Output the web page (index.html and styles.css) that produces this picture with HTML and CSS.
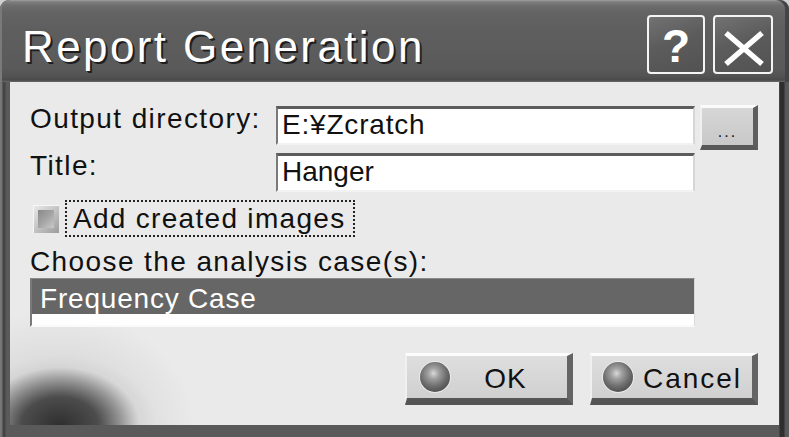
FILE: index.html
```html
<!DOCTYPE html>
<html lang="en">
<head>
<meta charset="utf-8">
<title>Report Generation</title>
<link rel="stylesheet" href="styles.css">
</head>
<body>
<div class="window">
  <div class="titlebar">
    <span class="title">Report Generation</span>
    <div class="caption-buttons">
      <div class="cap-btn help">?</div>
      <div class="cap-btn close">
        <svg width="56" height="55" viewBox="0 0 56 55"><path d="M11 16 L47 47 M47 16 L11 47" stroke="#fff" stroke-width="5.5" fill="none"/></svg>
      </div>
    </div>
  </div>
  <div class="content">
    <div class="form-grid">
      <div class="label">Output directory:</div>
      <div class="field">E:¥Zcratch</div>
      <div class="browse">...</div>
      <div class="label label-2">Title:</div>
      <div class="field field-2">Hanger</div>
    </div>
    <div class="check-row">
      <div class="checkbox"><div class="checkbox-inner"></div></div>
      <div class="focus">Add created images</div>
    </div>
    <div class="label choose">Choose the analysis case(s):</div>
    <div class="listbox">
      <div class="list-item selected">Frequency Case</div>
    </div>
    <div class="actions">
      <div class="btn"><span class="ball"></span><span class="btn-text ok">OK</span></div>
      <div class="btn btn-cancel"><span class="ball"></span><span class="btn-text cancel">Cancel</span></div>
    </div>
  </div>
</div>
</body>
</html>
```

FILE: styles.css
```css
html, body {
  margin: 0;
  padding: 0;
  background: #cfcfcf;
}

.window {
  width: 789px;
  height: 437px;
  box-sizing: border-box;
  padding: 0 10px 12px 10px;
  border-radius: 9px 9px 0 0;
  overflow: hidden;
  background: linear-gradient(90deg, #7a7a7a 0, #707070 2px, #444 3px, #444 5px, #5a5a5a 6px, #5a5a5a 779px, #2e2e2e 780px, #2e2e2e 784px, #555 785px, #5c5c5c 789px);
  font-family: "Liberation Sans", Arial, sans-serif;
  color: #111;
}

.titlebar {
  margin: 0 -10px;
  height: 82px;
  display: flex;
  align-items: flex-start;
  background: linear-gradient(180deg, #a0a0a0 0, #7c7c7c 2px, #6c6c6c 6px, #646464 12px, #5e5e5e 30px, #5a5a5a 68px, #535353 76px, #4a4a4a 80px, #6a6a6a 82px);
  border-radius: 9px 9px 0 0;
  box-shadow: inset 2px 0 0 #7a7a7a, inset -4px 0 0 #444;
}

.title {
  margin: 25px 0 0 22px;
  font-size: 44px;
  line-height: 44px;
  letter-spacing: 2.4px;
  color: #fff;
  text-shadow: 2px 2px 0 #1e1e1e, 1px 1px 0 #2a2a2a;
}

.caption-buttons {
  margin: 15px 16px 0 auto;
  display: flex;
  gap: 8px;
}

.cap-btn {
  box-sizing: border-box;
  width: 58px;
  height: 59px;
  border: 2px solid #f4f4f4;
  border-radius: 4px;
  background: linear-gradient(160deg, #727272 0%, #5c5c5c 45%, #525252 100%);
  display: flex;
  align-items: center;
  justify-content: center;
  color: #fff;
}

.cap-btn.close {
  width: 60px;
}

.help {
  font-size: 46px;
  font-weight: bold;
  line-height: 46px;
  padding-top: 2px;
}

.content {
  height: 343px;
  box-sizing: border-box;
  padding: 22px 21px 20px 20px;
  background-color: #eaeaea;
  background-image:
    radial-gradient(ellipse 80px 58px at 50px 100%, rgba(36,36,36,0.92) 0%, rgba(56,56,56,0.86) 48%, rgba(95,95,95,0.58) 74%, rgba(150,150,150,0) 100%),
    radial-gradient(ellipse 100px 72px at 50px 100%, rgba(200,200,200,0) 70%, rgba(210,210,210,0.5) 82%, rgba(210,210,210,0) 96%),
    radial-gradient(ellipse 140px 115px at 45px 100%, rgba(120,120,120,0.5) 0%, rgba(170,170,170,0.22) 55%, rgba(234,234,234,0) 100%);
  background-repeat: no-repeat;
}

.label {
  font-size: 28px;
  line-height: 30px;
  letter-spacing: 1.4px;
}

.form-grid {
  display: grid;
  grid-template-columns: 246px 419px 63px;
  grid-template-rows: 46px 42px;
}

.field {
  box-sizing: border-box;
  height: 39px;
  margin-top: 2px;
  border-style: solid;
  border-width: 3px 2px 2px 2px;
  border-color: #5c5c5c #d6d6d6 #f2f2f2 #7a7a7a;
  background: #fff;
  padding: 1px 4px 0 4px;
  font-size: 28px;
  line-height: 30px;
  letter-spacing: 0.8px;
  white-space: nowrap;
}

.label-2 {
  margin-top: 1px;
}

.field-2 {
  margin-top: 3px;
  letter-spacing: 0;
}

.browse {
  box-sizing: border-box;
  width: 58px;
  height: 45px;
  margin: 1px 0 0 5px;
  border-style: solid;
  border-width: 3px 5px 5px 2px;
  border-color: #fbfbfb #5e5e5e #585858 #f0f0f0;
  background: linear-gradient(180deg, #d6d6d6, #c8c8c8);
  display: flex;
  align-items: flex-end;
  justify-content: center;
  font-size: 16px;
  line-height: 16px;
  letter-spacing: 2px;
  padding-bottom: 5px;
  color: #111;
}

.check-row {
  margin-top: 8px;
  display: flex;
  align-items: center;
  height: 37px;
}

.checkbox {
  box-sizing: border-box;
  width: 26px;
  height: 28px;
  margin-left: 3px;
  padding: 5px;
  background: linear-gradient(135deg, #ececec 0%, #c4c4c4 50%, #9c9c9c 100%);
  box-shadow: inset 1px 1px 0 #f6f6f6;
}

.checkbox-inner {
  width: 100%;
  height: 100%;
  background: linear-gradient(135deg, #8a8a8a 0%, #a4a4a4 50%, #cacaca 100%);
}

.focus {
  box-sizing: border-box;
  height: 37px;
  margin-left: 6px;
  border: 2px dotted #222;
  padding: 2px 8px 0 6px;
  font-size: 28px;
  line-height: 30px;
  letter-spacing: 1.3px;
}

.choose {
  margin-top: 10px;
}

.listbox {
  box-sizing: border-box;
  width: 665px;
  height: 49px;
  margin-top: 1px;
  border-style: solid;
  border-width: 1px 1px 2px 2px;
  border-color: #8a8a8a #dadada #fafafa #7a7a7a;
  background: #fff;
}

.list-item {
  height: 35px;
  box-sizing: border-box;
  padding: 5px 0 0 8px;
  font-size: 28px;
  line-height: 30px;
  letter-spacing: 0.8px;
}

.list-item.selected {
  background: #666;
  color: #fff;
}

.actions {
  margin-top: 26px;
  display: flex;
  justify-content: flex-end;
  gap: 17px;
}

.btn {
  box-sizing: border-box;
  width: 168px;
  height: 52px;
  border-style: solid;
  border-width: 3px 6px 7px 2px;
  border-color: #fdfdfd #646464 #555 #f0f0f0;
  background: linear-gradient(180deg, #dedede, #d0d0d0);
  display: flex;
  align-items: center;
  padding-left: 13px;
}

.btn-cancel {
  padding-left: 11px;
}

.ball {
  flex: none;
  width: 30px;
  height: 30px;
  border-radius: 50%;
  background: radial-gradient(circle at 45% 38%, #d8d8d8 0%, #a0a0a0 22%, #6e6e6e 52%, #4e4e4e 78%, #7a7a7a 100%);
  box-shadow: 0 0 0 1px rgba(255,255,255,0.5);
}

.btn-text {
  flex: 1;
  text-align: center;
  font-size: 28px;
  line-height: 30px;
  padding-top: 4px;
}

.btn-text.ok {
  letter-spacing: 1px;
  padding-right: 6px;
}

.btn-text.cancel {
  letter-spacing: 2px;
}
```
